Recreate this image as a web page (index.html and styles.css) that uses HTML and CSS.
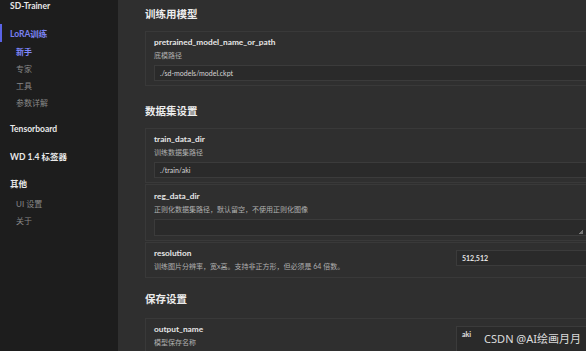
FILE: index.html
```html
<!DOCTYPE html>
<html lang="zh-CN">
<head>
<meta charset="UTF-8">
<meta name="viewport" content="width=device-width, initial-scale=1.0">
<title>SD-Trainer</title>
<link rel="stylesheet" href="styles.css">
</head>
<body>

<div class="app">
    <div class="sidebar">
        <div class="brand">SD-Trainer</div>
        <div class="group active">LoRA训练</div>
        <div class="sub current">新手</div>
        <div class="sub">专家</div>
        <div class="sub">工具</div>
        <div class="sub">参数详解</div>
        <div class="group">Tensorboard</div>
        <div class="group wide">WD 1.4 标签器</div>
        <div class="group">其他</div>
        <div class="sub">UI 设置</div>
        <div class="sub">关于</div>
    </div>

    <div class="main">
        <h2 class="first">训练用模型</h2>
        <div class="card">
            <div class="name">pretrained_model_name_or_path</div>
            <div class="desc">底模路径</div>
            <div class="field">./sd-models/model.ckpt</div>
        </div>

        <h2>数据集设置</h2>
        <div class="card">
            <div class="name">train_data_dir</div>
            <div class="desc">训练数据集路径</div>
            <div class="field">./train/aki</div>
        </div>
        <div class="card text">
            <div class="name">reg_data_dir</div>
            <div class="desc">正则化数据集路径，默认留空，不使用正则化图像</div>
            <div class="field area"><span class="grip"></span></div>
        </div>
        <div class="card row">
            <div class="info">
                <div class="name">resolution</div>
                <div class="desc">训练图片分辨率，宽x高。支持非正方形，但必须是 64 倍数。</div>
            </div>
            <div class="field short">512,512</div>
        </div>

        <h2 class="tight">保存设置</h2>
        <div class="card row">
            <div class="info">
                <div class="name">output_name</div>
                <div class="desc">模型保存名称</div>
            </div>
            <div class="field short tall">aki</div>
        </div>
    </div>
</div>

<div class="watermark">CSDN @AI绘画月月</div>

</body>
</html>
```

FILE: styles.css
```css
html, body {
    margin: 0;
    padding: 0;
    height: 100%;
    overflow: hidden;
}
body {
    font-family: Lato, "Noto Sans CJK SC", sans-serif;
    background-color: #2f2f2f;
    color: #e2e2e2;
}
.app {
    display: flex;
    height: 100%;
}
.sidebar {
    width: 118px;
    flex-shrink: 0;
    background-color: #1d1d1d;
    display: flex;
    flex-direction: column;
}
.brand {
    font-size: 8.5px;
    font-weight: 700;
    line-height: 12px;
    padding-left: 10px;
    color: #e8e8e8;
}
.group {
    font-size: 8.5px;
    font-weight: 700;
    line-height: 12px;
    padding-left: 10px;
    margin-top: 15px;
    color: #e8e8e8;
}
.group.wide {
    margin-top: 16px;
}
.group.active {
    color: #7a82f2;
    border-left: 2px solid #5a63e6;
    padding-left: 8px;
    padding-top: 4px;
    padding-bottom: 2px;
    margin-top: 12px;
}
.sub {
    font-size: 8px;
    line-height: 12px;
    padding-left: 16px;
    margin-top: 5px;
    color: #888888;
}
.sub.current {
    color: #7f88ff;
    font-weight: 700;
}
.group + .sub {
    margin-top: 8px;
}
.group.active + .sub {
    margin-top: 4px;
}
.sub + .group {
    margin-top: 14px;
}
.main {
    flex: 1;
    padding-left: 27px;
    margin-right: -10px;
    min-width: 0;
}
h2 {
    font-size: 10.5px;
    font-weight: 700;
    line-height: 18px;
    margin: 16px 0 8px;
    color: #ececec;
}
h2.first {
    margin-top: 5px;
    margin-bottom: 8px;
}
h2.tight {
    margin-top: 12px;
    margin-bottom: 10px;
}
.card {
    border: 1px solid #393939;
    padding: 4px 8px 4px;
    margin-bottom: 1px;
}
.card.text {
    padding-top: 5px;
    padding-bottom: 4px;
}
.name {
    font-size: 8.3px;
    font-weight: 700;
    line-height: 13px;
    color: #e6e6e6;
}
.desc {
    font-size: 7px;
    line-height: 12px;
    color: #b0b0b0;
}
.field {
    margin-top: 4px;
    height: 14px;
    border: 1px solid #3b3b3b;
    background-color: #2a2a2a;
    font-size: 7px;
    line-height: 14px;
    padding-left: 5px;
    color: #d6d6d6;
    position: relative;
}
.field.area {
    height: 15px;
}
.grip {
    position: absolute;
    right: 3px;
    bottom: 1px;
    width: 4px;
    height: 4px;
    background: linear-gradient(135deg, transparent 50%, #777 50%);
}
.card.row {
    display: flex;
    align-items: flex-start;
    justify-content: space-between;
    padding-bottom: 5px;
}
.info {
    flex: 1;
}
.field.short {
    width: 124px;
    flex-shrink: 0;
    margin-top: 3px;
    font-weight: 700;
    color: #e4e4e4;
}
.field.tall {
    height: 26px;
    line-height: 12px;
    padding-top: 1px;
}
.watermark {
    position: absolute;
    right: 5px;
    bottom: 5px;
    font-size: 11px;
    color: rgba(255, 255, 255, 0.85);
    font-family: "Noto Sans", "Noto Sans CJK SC", sans-serif;
}
```
